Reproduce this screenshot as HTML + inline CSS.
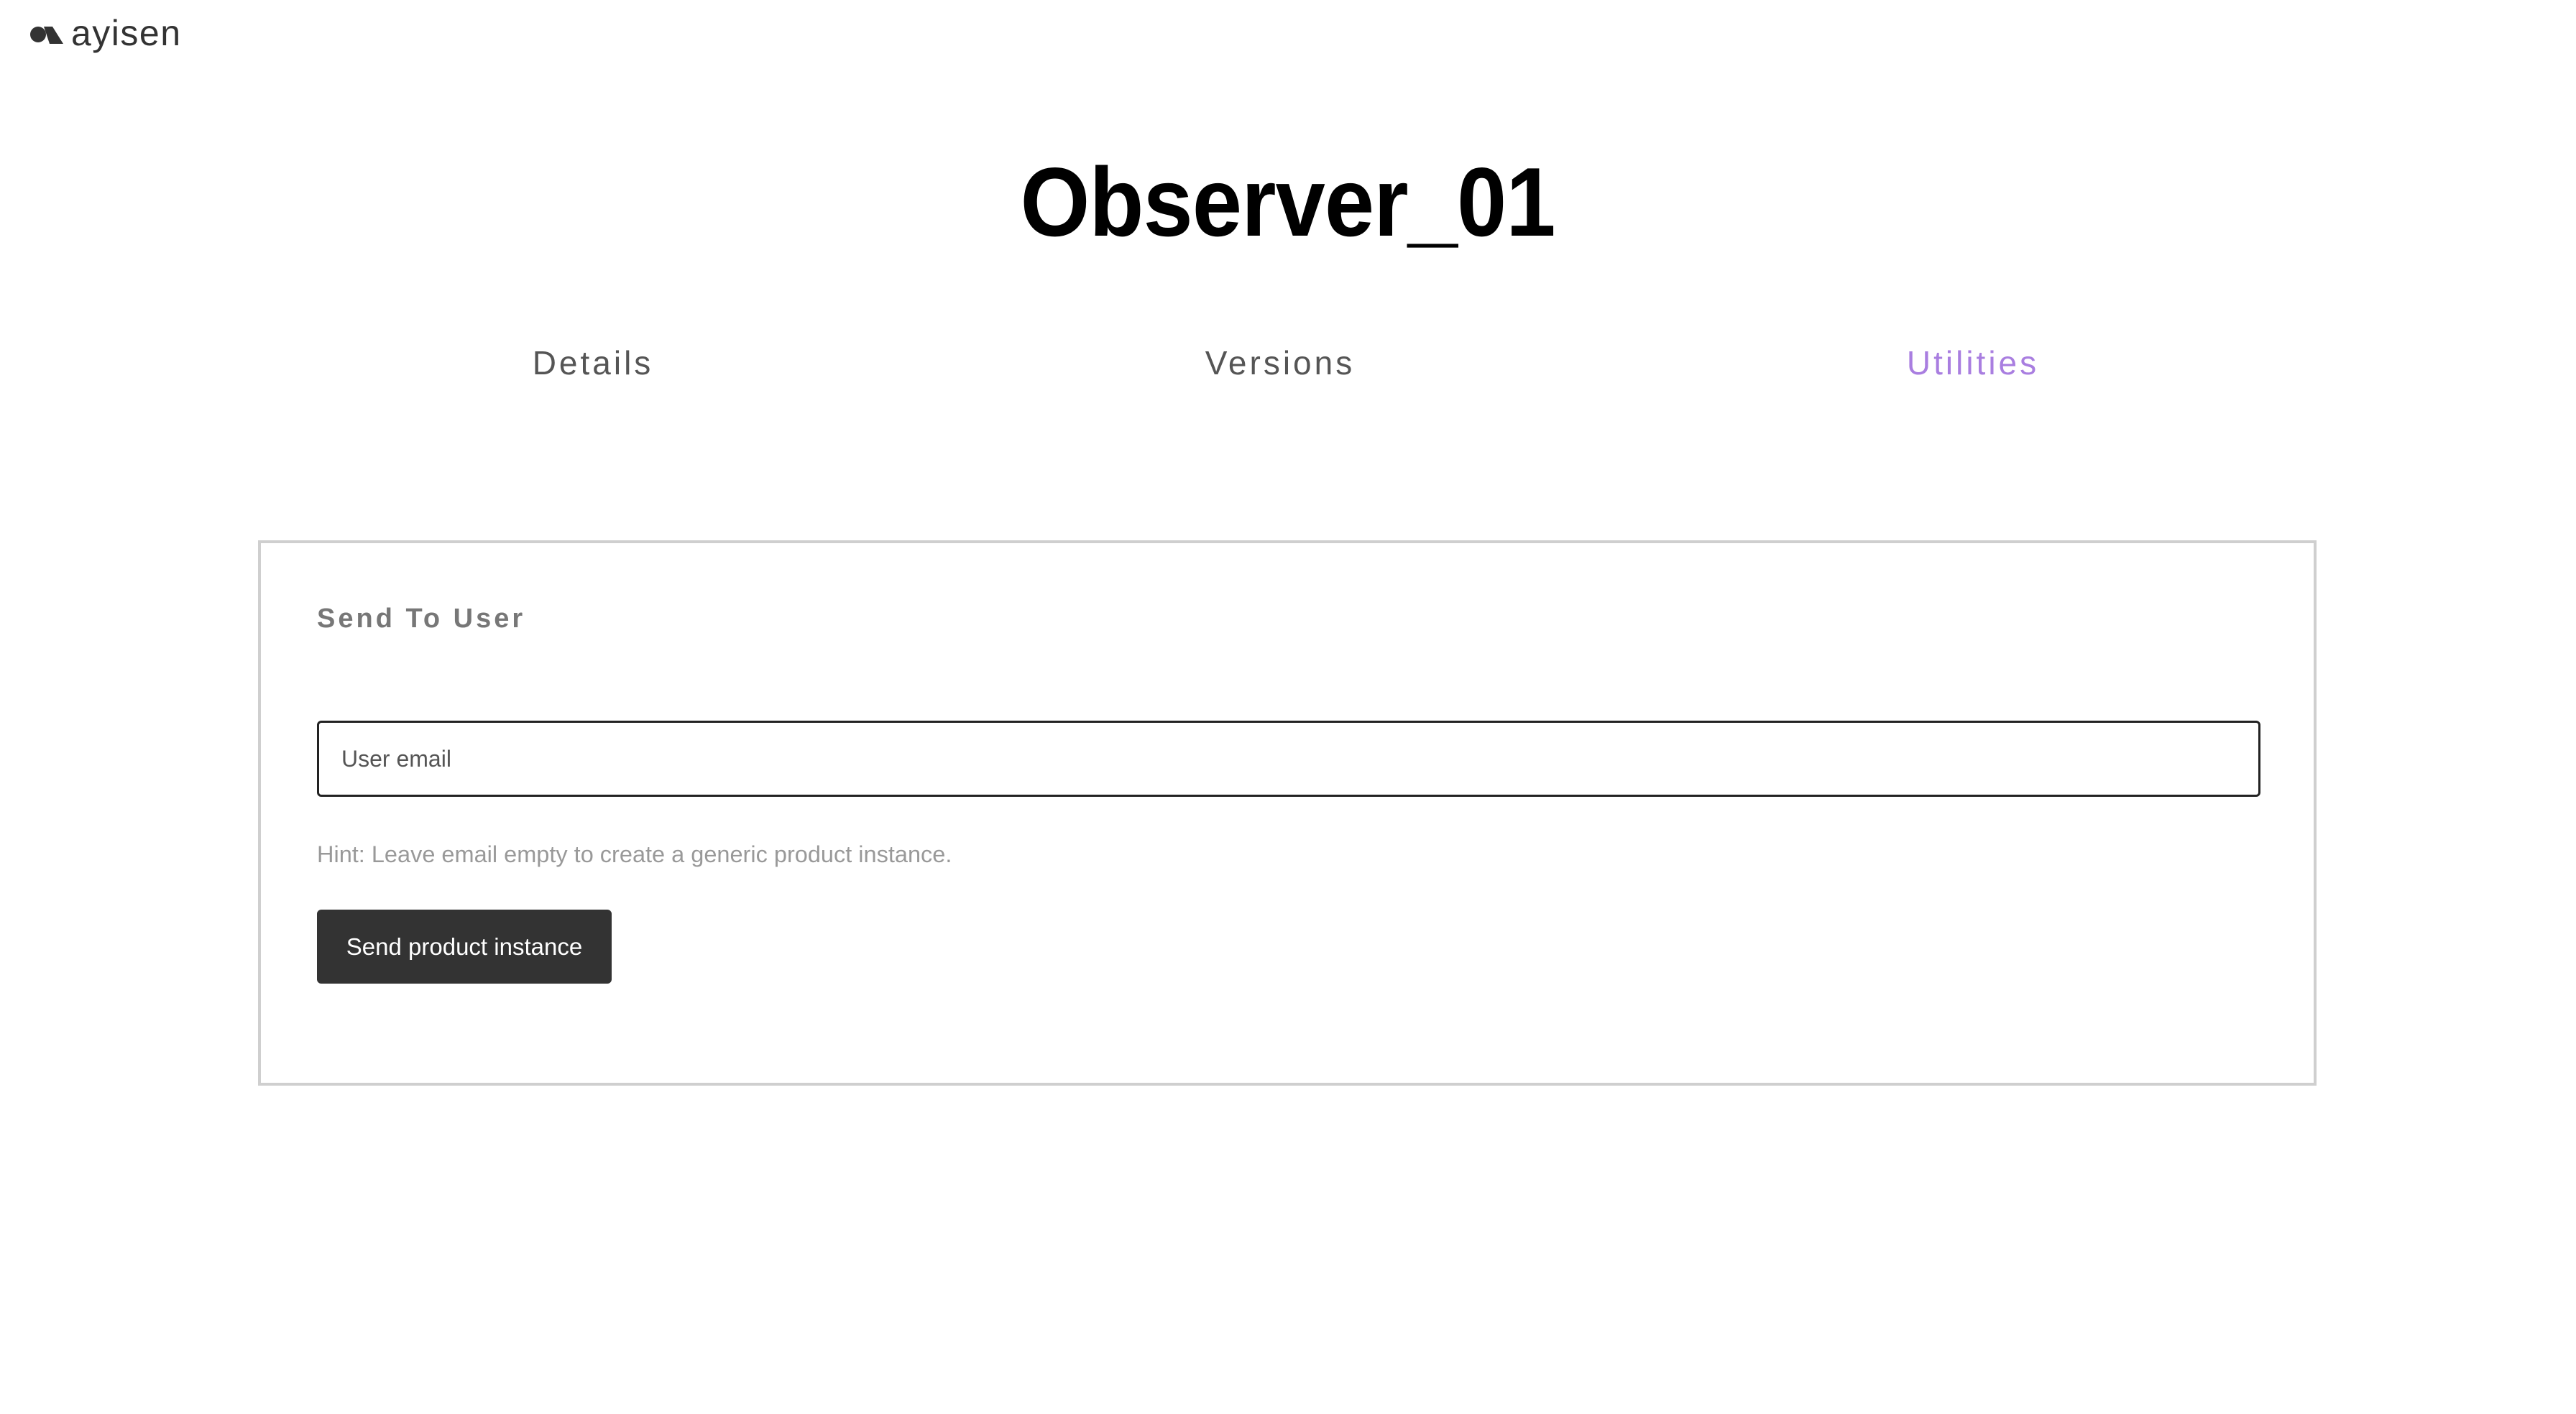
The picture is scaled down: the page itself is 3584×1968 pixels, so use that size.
<!DOCTYPE html>
<html><head><meta charset="utf-8"><style>
html,body{margin:0;padding:0;width:3584px;height:1968px;background:#fff;overflow:hidden;font-family:"Liberation Sans",sans-serif;}
.abs{position:absolute;}
.logo{left:41px;top:18px;height:56px;display:flex;align-items:center;}
.logo span{font-size:50px;color:#333;letter-spacing:1.5px;margin-left:8px;}
.title{left:0;width:3584px;top:196px;text-align:center;font-weight:bold;font-size:136px;line-height:170px;color:#000;letter-spacing:-1px;}
.title div{display:inline-block;transform:scaleX(0.915);}
.tab{top:475px;font-size:46px;line-height:60px;letter-spacing:4px;color:#555;width:600px;text-align:center;}
.box{left:359px;top:752px;width:2856px;height:751px;border:4px solid #cfcfcf;}
</style></head><body>
<div class="abs logo">
<svg width="50" height="34" viewBox="0 0 50 34"><circle cx="12" cy="19" r="11" fill="#333"/><polygon points="20,8 32,8 47,32 28,32" fill="#333"/></svg>
<span>ayisen</span></div>
<div class="abs title"><div>Observer_01</div></div>
<div class="abs tab" style="left:525px">Details</div>
<div class="abs tab" style="left:1481px">Versions</div>
<div class="abs tab" style="left:2445px;color:#a97ee0">Utilities</div>
<div class="abs box"></div>
<div class="abs" style="left:441px;top:838px;font-size:38px;font-weight:bold;letter-spacing:4px;color:#777;line-height:46px">Send To User</div>
<div class="abs" style="left:441px;top:1003px;box-sizing:border-box;width:2704px;height:106px;border:3px solid #222;border-radius:6px"></div>
<div class="abs" style="left:475px;top:1036px;font-size:32px;color:#555;line-height:40px">User email</div>
<div class="abs" style="left:441px;top:1169px;font-size:32.5px;color:#999;line-height:40px">Hint: Leave email empty to create a generic product instance.</div>
<div class="abs" style="left:441px;top:1266px;width:410px;height:103px;background:#333;border-radius:6px;color:#fff;font-size:33px;line-height:103px;text-align:center">Send product instance</div>
</body></html>
